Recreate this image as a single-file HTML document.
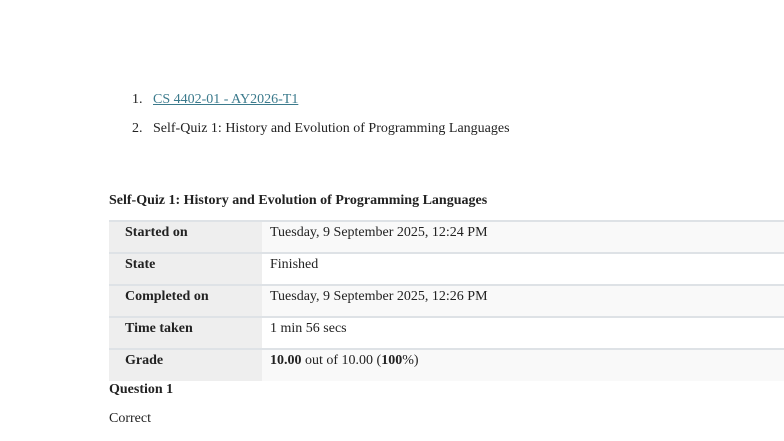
<!DOCTYPE html>
<html><head><style>
body{margin:0;background:#fff;font-family:"Liberation Serif",serif;font-size:14px;color:#222;width:784px;height:441px;overflow:hidden;position:relative}
.a{position:absolute;white-space:nowrap}
a{color:#3b7a8c;text-decoration:underline}
.r{position:absolute;left:109px;width:675px;height:30px;border-top:2px solid #dee2e6}
.r .h{position:absolute;left:0;top:0;width:153px;height:30px;background:#eee;font-weight:bold;padding-left:16px;padding-top:2px;box-sizing:border-box;line-height:18px}
.r .d{position:absolute;left:153px;top:0;right:0;height:28px;padding-left:8px;padding-top:2px;line-height:18px}
.o .d{background:#f9f9f9}
</style></head><body>
<div class="a" style="left:132px;top:92px">1.&nbsp;&nbsp;&nbsp;<a>CS 4402-01 - AY2026-T1</a></div>
<div class="a" style="left:132px;top:121px">2.&nbsp;&nbsp;&nbsp;Self-Quiz 1: History and Evolution of Programming Languages</div>
<div class="a" style="left:109px;top:193px;font-weight:bold">Self-Quiz 1: History and Evolution of Programming Languages</div>
<div class="r o" style="top:220px"><div class="h">Started on</div><div class="d">Tuesday, 9 September 2025, 12:24 PM</div></div>
<div class="r" style="top:252px"><div class="h">State</div><div class="d">Finished</div></div>
<div class="r o" style="top:284px"><div class="h">Completed on</div><div class="d">Tuesday, 9 September 2025, 12:26 PM</div></div>
<div class="r" style="top:316px"><div class="h">Time taken</div><div class="d">1 min 56 secs</div></div>
<div class="r o" style="top:348px;height:31px"><div class="h" style="height:31px">Grade</div><div class="d" style="height:29px"><b>10.00</b> out of 10.00 (<b>100</b>%)</div></div>
<div class="a" style="left:109px;top:382px;font-weight:bold">Question 1</div>
<div class="a" style="left:109px;top:411px">Correct</div>
</body></html>
